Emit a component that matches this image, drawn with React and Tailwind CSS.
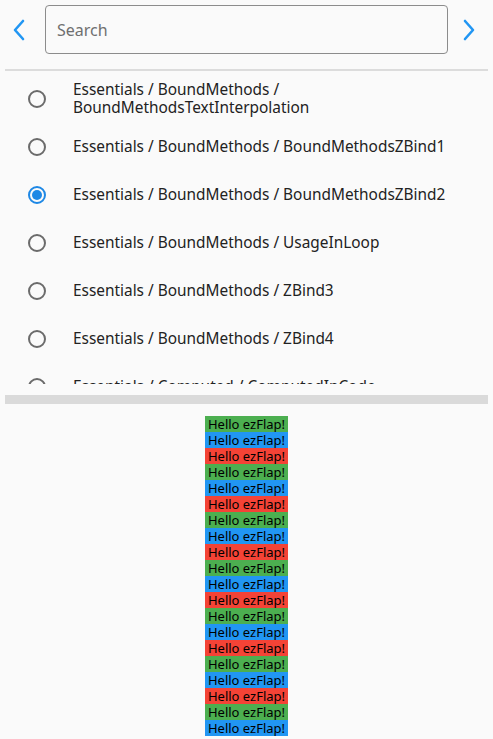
import React from 'react';

const items = [
  'Essentials / BoundMethods / BoundMethodsTextInterpolation',
  'Essentials / BoundMethods / BoundMethodsZBind1',
  'Essentials / BoundMethods / BoundMethodsZBind2',
  'Essentials / BoundMethods / UsageInLoop',
  'Essentials / BoundMethods / ZBind3',
  'Essentials / BoundMethods / ZBind4',
  'Essentials / Computed / ComputedInCode',
];

const colors = ['bg-[#4caf50]', 'bg-[#2196f3]', 'bg-[#f44336]'];

const Radio = ({ checked }) => (
  <div
    className={`w-[18px] h-[18px] rounded-full border-2 flex items-center justify-center shrink-0 ${
      checked ? 'border-[#1e88e5]' : 'border-[#6b6b6b]'
    }`}
  >
    {checked && <div className="w-[10px] h-[10px] rounded-full bg-[#1e88e5]" />}
  </div>
);

const Chevron = ({ left }) => (
  <svg width="14" height="22" viewBox="0 0 14 22" fill="none">
    <path
      d={left ? 'M11 2 L3 11 L11 20' : 'M3 2 L11 11 L3 20'}
      stroke="#2196f3"
      strokeWidth="2.6"
      strokeLinecap="round"
      strokeLinejoin="round"
    />
  </svg>
);

export default function App() {
  return (
    <div className="w-[493px] h-[739px] overflow-hidden bg-[#fafafa] font-['Noto_Sans',sans-serif]">
      {/* search header */}
      <div className="flex items-center pt-[5px]">
        <div className="w-[45px] flex justify-center pr-[7px]">
          <Chevron left />
        </div>
        <div className="w-[403px] h-[49px] border border-[#8c8c8c] rounded-[4px] flex items-center px-[11px]">
          <span className="text-[16px] text-[#6f6f6f]">Search</span>
        </div>
        <div className="w-[45px] flex justify-center pr-[4px]">
          <Chevron />
        </div>
      </div>
      <div className="mx-[5px] mt-[15px] h-[2px] bg-[#dcdcdc]" />

      {/* stories list */}
      <div className="h-[313px] overflow-hidden pt-[4px]">
        {items.map((label, i) => (
          <div key={i} className="h-[48px] flex items-center">
            <div className="w-[73px] pl-[28px] shrink-0">
              <Radio checked={i === 2} />
            </div>
            <span className="text-[15.4px] leading-[18px] text-[#222222] pr-[20px]">{label}</span>
          </div>
        ))}
      </div>

      <div className="mx-[5px] mt-[11px] h-[9px] bg-[#dadada]" />

      {/* preview */}
      <div className="mt-[12px] flex flex-col items-center">
        <div className="w-[83px]">
          {Array.from({ length: 20 }).map((_, i) => (
            <div
              key={i}
              className={`h-[16px] text-[13px] leading-[16px] text-center whitespace-nowrap text-black ${colors[i % 3]}`}
            >
              Hello ezFlap!
            </div>
          ))}
        </div>
      </div>
    </div>
  );
}
